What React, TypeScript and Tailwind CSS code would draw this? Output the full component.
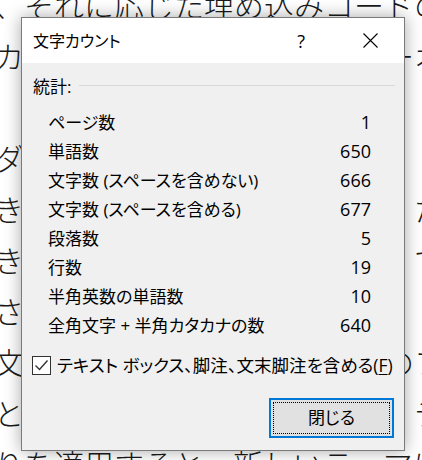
import React from "react";

const filler = "文書に最適なビデオを検索";

const docLines: string[] = [
  "、それに応じた埋め込みコードの形",
  "カ" + filler + "ーオ",
  "　" + filler + "　　",
  "ダ" + filler + "　ト",
  "き" + filler + "　た",
  "き" + filler + "　で",
  "さ" + filler + "　　",
  "文" + filler + "のフ",
  "と" + filler + "　テ",
  "りを適用すると、新しいテーマに",
];

const rows: [string, string][] = [
  ["ページ数", "1"],
  ["単語数", "650"],
  ["文字数 (スペースを含めない)", "666"],
  ["文字数 (スペースを含める)", "677"],
  ["段落数", "5"],
  ["行数", "19"],
  ["半角英数の単語数", "10"],
  ["全角文字 + 半角カタカナの数", "640"],
];

export default function App() {
  return (
    <div className="relative w-[422px] h-[460px] overflow-hidden bg-white">
      {/* document behind */}
      <div className="ml-[-6px] mt-[-21px] font-['Noto_Sans_CJK_JP',sans-serif] font-light text-[30px] leading-[51px] text-[#1a1a1a] whitespace-nowrap">
        {docLines.map((l, i) => (
          <div key={i}>{l}</div>
        ))}
      </div>

      {/* dialog */}
      <div className="absolute left-[21px] top-[17px] w-[384px] h-[434px] border border-[#7a7a7a] bg-[#f0f0f0] shadow-[0_0_16px_rgba(0,0,0,0.35)] flex flex-col font-['Open_Sans','Noto_Sans_CJK_JP',sans-serif] text-black [font-feature-settings:'palt']">
        <div className="h-[45px] shrink-0 bg-white flex items-center pl-[11px]">
          <span className="text-[16px]">文字カウント</span>
          <span className="ml-auto text-[18px] leading-none">?</span>
          <svg
            className="ml-[58px] mr-[26px]"
            width="15"
            height="15"
            viewBox="0 0 15 15"
            fill="none"
            stroke="#000"
            strokeWidth="1.1"
          >
            <path d="M0.5 0.5 L14.5 14.5 M14.5 0.5 L0.5 14.5" />
          </svg>
        </div>

        <div className="flex-1 flex flex-col pl-[11px] pr-[9px] text-[17px]">
          <div className="mt-[12px] h-[24px] flex items-center">
            <span>統計:</span>
            <div className="ml-[8px] flex-1 h-px bg-[#d9d9d9] mt-[-3px]" />
          </div>

          <div className="mt-[9px] flex flex-col pl-[15px] pr-[24px]">
            {rows.map(([label, value]) => (
              <div key={label} className="h-[29px] flex items-center justify-between whitespace-nowrap">
                <span>{label}</span>
                <span className="text-[18px]">{value}</span>
              </div>
            ))}
          </div>

          <div className="mt-[13px] h-[24px] flex items-center whitespace-nowrap">
            <div className="shrink-0 ml-[-1px] w-[19px] h-[19px] border border-[#333] bg-white flex items-center justify-center">
              <svg width="17" height="17" viewBox="0 0 17 17" fill="none" stroke="#333" strokeWidth="1.4">
                <path d="M2.5 8.5 L6.5 12.5 L14.5 3.5" />
              </svg>
            </div>
            <span className="ml-[6px] text-[17.5px]">
              テキスト ボックス、脚注、文末脚注を含める(<span className="underline underline-offset-2">F</span>)
            </span>
          </div>

          <div className="mt-[21px] flex justify-end">
            <div className="mr-[1px] w-[125px] h-[40px] border-2 border-[#0078d7] bg-[#e1e1e1] p-[2px]">
              <div className="w-full h-full border border-dotted border-black flex items-center justify-center">
                閉じる
              </div>
            </div>
          </div>
        </div>
      </div>
    </div>
  );
}
